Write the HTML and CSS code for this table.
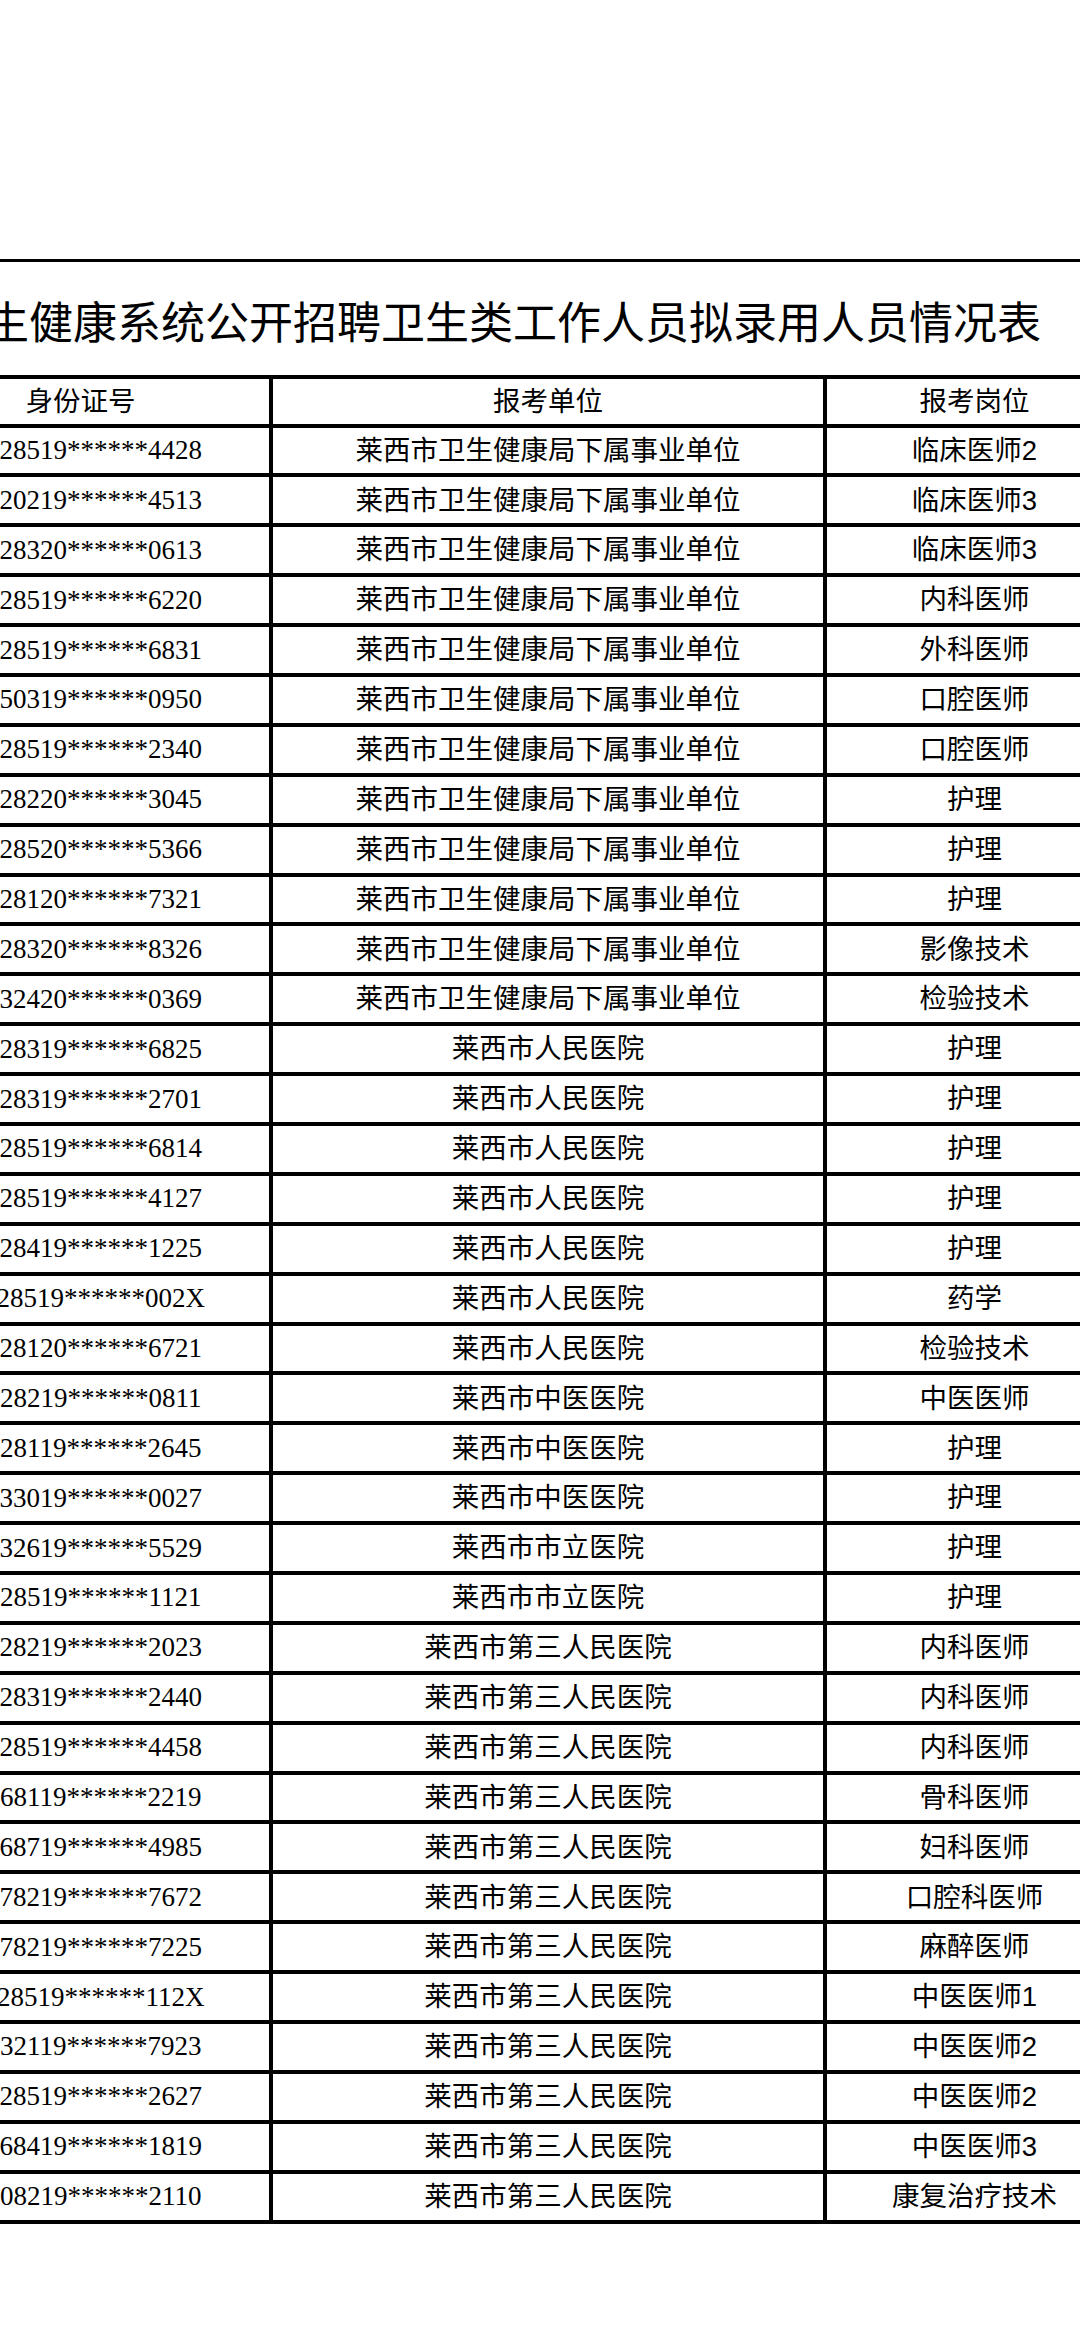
FILE: index.html
```html
<!DOCTYPE html>
<html lang="zh-CN">
<head>
<meta charset="utf-8">
<title>拟录用人员情况表</title>
<link rel="stylesheet" href="styles.css">
</head>
<body>
<div class="sheet">
  <div class="title"><span class="title-text">莱西市卫生健康系统公开招聘卫生类工作人员拟录用人员情况表</span></div>
  <div class="row head">
    <div class="cell">身份证号</div>
    <div class="cell">报考单位</div>
    <div class="cell last">报考岗位</div>
  </div>
  <div class="row"><div class="cell id">37028519******4428</div><div class="cell">莱西市卫生健康局下属事业单位</div><div class="cell last">临床医师2</div></div>
  <div class="row"><div class="cell id">37020219******4513</div><div class="cell">莱西市卫生健康局下属事业单位</div><div class="cell last">临床医师3</div></div>
  <div class="row"><div class="cell id">37028320******0613</div><div class="cell">莱西市卫生健康局下属事业单位</div><div class="cell last">临床医师3</div></div>
  <div class="row"><div class="cell id">37028519******6220</div><div class="cell">莱西市卫生健康局下属事业单位</div><div class="cell last">内科医师</div></div>
  <div class="row"><div class="cell id">37028519******6831</div><div class="cell">莱西市卫生健康局下属事业单位</div><div class="cell last">外科医师</div></div>
  <div class="row"><div class="cell id">37050319******0950</div><div class="cell">莱西市卫生健康局下属事业单位</div><div class="cell last">口腔医师</div></div>
  <div class="row"><div class="cell id">37028519******2340</div><div class="cell">莱西市卫生健康局下属事业单位</div><div class="cell last">口腔医师</div></div>
  <div class="row"><div class="cell id">37028220******3045</div><div class="cell">莱西市卫生健康局下属事业单位</div><div class="cell last">护理</div></div>
  <div class="row"><div class="cell id">37028520******5366</div><div class="cell">莱西市卫生健康局下属事业单位</div><div class="cell last">护理</div></div>
  <div class="row"><div class="cell id">37028120******7321</div><div class="cell">莱西市卫生健康局下属事业单位</div><div class="cell last">护理</div></div>
  <div class="row"><div class="cell id">37028320******8326</div><div class="cell">莱西市卫生健康局下属事业单位</div><div class="cell last">影像技术</div></div>
  <div class="row"><div class="cell id">37032420******0369</div><div class="cell">莱西市卫生健康局下属事业单位</div><div class="cell last">检验技术</div></div>
  <div class="row"><div class="cell id">37028319******6825</div><div class="cell">莱西市人民医院</div><div class="cell last">护理</div></div>
  <div class="row"><div class="cell id">37028319******2701</div><div class="cell">莱西市人民医院</div><div class="cell last">护理</div></div>
  <div class="row"><div class="cell id">37028519******6814</div><div class="cell">莱西市人民医院</div><div class="cell last">护理</div></div>
  <div class="row"><div class="cell id">37028519******4127</div><div class="cell">莱西市人民医院</div><div class="cell last">护理</div></div>
  <div class="row"><div class="cell id">37028419******1225</div><div class="cell">莱西市人民医院</div><div class="cell last">护理</div></div>
  <div class="row"><div class="cell id">37028519******002X</div><div class="cell">莱西市人民医院</div><div class="cell last">药学</div></div>
  <div class="row"><div class="cell id">37028120******6721</div><div class="cell">莱西市人民医院</div><div class="cell last">检验技术</div></div>
  <div class="row"><div class="cell id">37028219******0811</div><div class="cell">莱西市中医医院</div><div class="cell last">中医医师</div></div>
  <div class="row"><div class="cell id">37028119******2645</div><div class="cell">莱西市中医医院</div><div class="cell last">护理</div></div>
  <div class="row"><div class="cell id">37033019******0027</div><div class="cell">莱西市中医医院</div><div class="cell last">护理</div></div>
  <div class="row"><div class="cell id">37032619******5529</div><div class="cell">莱西市市立医院</div><div class="cell last">护理</div></div>
  <div class="row"><div class="cell id">37028519******1121</div><div class="cell">莱西市市立医院</div><div class="cell last">护理</div></div>
  <div class="row"><div class="cell id">37028219******2023</div><div class="cell">莱西市第三人民医院</div><div class="cell last">内科医师</div></div>
  <div class="row"><div class="cell id">37028319******2440</div><div class="cell">莱西市第三人民医院</div><div class="cell last">内科医师</div></div>
  <div class="row"><div class="cell id">37028519******4458</div><div class="cell">莱西市第三人民医院</div><div class="cell last">内科医师</div></div>
  <div class="row"><div class="cell id">37068119******2219</div><div class="cell">莱西市第三人民医院</div><div class="cell last">骨科医师</div></div>
  <div class="row"><div class="cell id">37068719******4985</div><div class="cell">莱西市第三人民医院</div><div class="cell last">妇科医师</div></div>
  <div class="row"><div class="cell id">37078219******7672</div><div class="cell">莱西市第三人民医院</div><div class="cell last">口腔科医师</div></div>
  <div class="row"><div class="cell id">37078219******7225</div><div class="cell">莱西市第三人民医院</div><div class="cell last">麻醉医师</div></div>
  <div class="row"><div class="cell id">37028519******112X</div><div class="cell">莱西市第三人民医院</div><div class="cell last">中医医师1</div></div>
  <div class="row"><div class="cell id">37032119******7923</div><div class="cell">莱西市第三人民医院</div><div class="cell last">中医医师2</div></div>
  <div class="row"><div class="cell id">37028519******2627</div><div class="cell">莱西市第三人民医院</div><div class="cell last">中医医师2</div></div>
  <div class="row"><div class="cell id">37068419******1819</div><div class="cell">莱西市第三人民医院</div><div class="cell last">中医医师3</div></div>
  <div class="row"><div class="cell id">37008219******2110</div><div class="cell">莱西市第三人民医院</div><div class="cell last">康复治疗技术</div></div>
</div>
</body>
</html>
```

FILE: styles.css
```css
html, body {
  margin: 0;
  padding: 0;
  background: #ffffff;
  overflow: hidden;
}

body {
  width: 1080px;
  height: 2337px;
  color: #000000;
  font-family: "Liberation Sans", "Noto Sans CJK SC", sans-serif;
}

.sheet {
  margin-top: 259px;
  margin-left: -112px;
  width: 1238px;
}

.title {
  box-sizing: border-box;
  height: 116px;
  border-top: 3px solid #000;
  display: flex;
  justify-content: flex-end;
  align-items: center;
  padding-right: 85px;
  padding-top: 2px;
}

.title-text {
  white-space: nowrap;
  font-family: "Noto Sans CJK SC", sans-serif;
  font-size: 44px;
  line-height: 1;
  flex-shrink: 0;
}

.row {
  display: grid;
  grid-template-columns: 381px 554px 303px;
  box-sizing: border-box;
  height: 49.9px;
  border-bottom: 4px solid #000;
}

.row.head {
  height: 52.5px;
  border-top: 4px solid #000;
}

.cell {
  box-sizing: border-box;
  border-left: 4px solid #000;
  display: flex;
  align-items: center;
  justify-content: center;
  white-space: nowrap;
  font-size: 27.5px;
  line-height: 1;
  overflow: hidden;
}

.cell.last {
  border-right: 4px solid #000;
}

.cell.id {
  font-family: "Liberation Serif", serif;
  font-size: 27px;
}
```
